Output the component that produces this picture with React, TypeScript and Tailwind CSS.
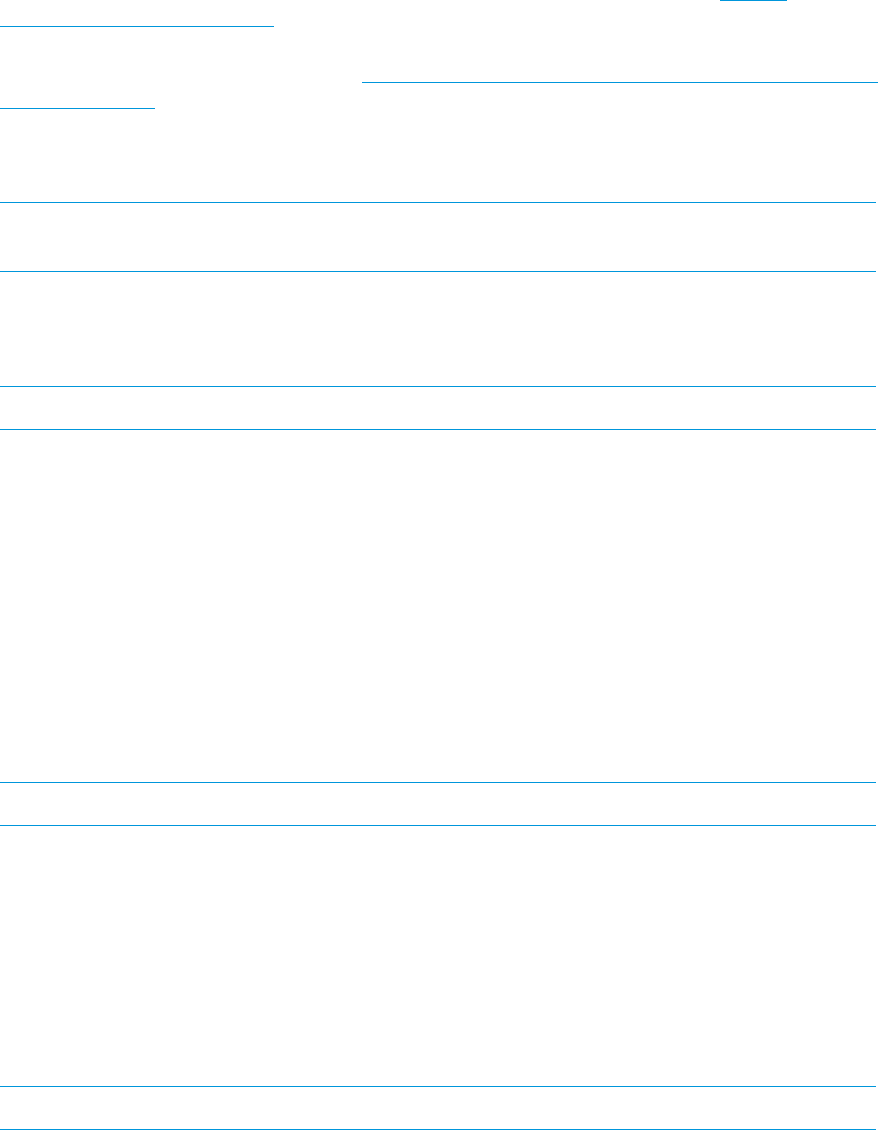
const LINE = "bg-[#0096db]";

function LinkUnderlines() {
  return (
    <div>
      <div className={`ml-[720px] h-px w-[67px] ${LINE}`} />
      <div className={`mt-[25px] h-px w-[274px] ${LINE}`} />
      <div className={`mt-[55px] ml-[362px] h-px w-[516px] ${LINE}`} />
      <div className={`mt-[25px] h-px w-[155px] ${LINE}`} />
    </div>
  );
}

const rows = [
  "h-[69px]",
  "h-[115px]",
  "h-[43px]",
  "h-[353px]",
  "h-[43px]",
  "h-[261px]",
  "h-[43px]",
];

export default function App() {
  return (
    <div className="h-[1130px] w-[878px] overflow-hidden bg-white font-['Liberation_Sans',Arial,sans-serif] text-white">
      <LinkUnderlines />
      <div className="mt-[93px] w-[876px] border-t border-[#0096db]">
        {rows.map((h, i) => (
          <div key={i} className={`${h} border-b border-[#0096db]`} />
        ))}
      </div>
    </div>
  );
}
